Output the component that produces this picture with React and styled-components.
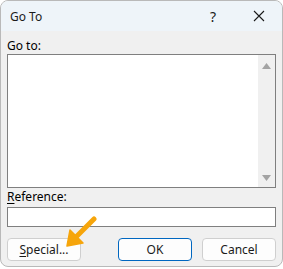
import React from 'react'
import styled, { createGlobalStyle } from 'styled-components'

const Global = createGlobalStyle`
    body{
        margin: 0;
        background: #ffffff;
        font-family: "Noto Sans", "Open Sans", sans-serif;
        font-size: 12px;
        color: #000;
    }
`

function App() {
    return (
        <>
            <Global />
            <Window>
                <TitleBar>
                    <Title>Go To</Title>
                    <TitleButton>?</TitleButton>
                    <TitleButton>
                        <svg width="12" height="12" viewBox="0 0 12 12">
                            <path d="M1 1 L11 11 M11 1 L1 11" stroke="#1a1a1a" strokeWidth="1.1" fill="none" />
                        </svg>
                    </TitleButton>
                </TitleBar>
                <Body>
                    <Label>Go to:</Label>
                    <ListBox>
                        <ListArea />
                        <ScrollBar>
                            <svg width="9" height="6" viewBox="0 0 9 6"><path d="M0 6 L4.5 0 L9 6 Z" fill="#a3a3a3" /></svg>
                            <svg width="9" height="6" viewBox="0 0 9 6"><path d="M0 0 L4.5 6 L9 0 Z" fill="#a3a3a3" /></svg>
                        </ScrollBar>
                    </ListBox>
                    <Label top={1}><u>R</u>eference:</Label>
                    <TextInput />
                    <ButtonRow>
                        <Button><u>S</u>pecial...</Button>
                        <Spacer />
                        <Button primary>OK</Button>
                        <Button>Cancel</Button>
                    </ButtonRow>
                </Body>
                <Arrow width="40" height="40" viewBox="0 0 40 40">
                    <path d="M28 3 L9 22" stroke="#f6a50b" strokeWidth="5" strokeLinecap="round" fill="none" />
                    <path d="M1 30 L4 14 L17 27 Z" fill="#f6a50b" stroke="#f6a50b" strokeWidth="1.5" strokeLinejoin="round" />
                </Arrow>
            </Window>
        </>
    )
}

export default App

const Window = styled.div`
    position: relative;
    width: 283px;
    height: 267px;
    box-sizing: border-box;
    border: 1px solid #b9b9b9;
    border-radius: 8px;
    background: #f0f0f0;
    overflow: hidden;
`

const TitleBar = styled.div`
    display: flex;
    align-items: center;
    height: 30px;
    background: #eef4f9;
`

const Title = styled.div`
    flex: 1;
    padding-left: 9px;
    font-size: 12px;
    color: #1a1a1a;
`

const TitleButton = styled.div`
    width: 46px;
    height: 30px;
    display: flex;
    align-items: center;
    justify-content: center;
    font-size: 14px;
    color: #1a1a1a;
`

const Body = styled.div`
    display: flex;
    flex-direction: column;
    padding: 7px 6px 0 6px;
`

const Label = styled.div`
    height: 16px;
    line-height: 16px;
    margin-top: ${p => p.top || 0}px;
    font-size: 12px;

    u{
        text-decoration-thickness: 1px;
        text-underline-offset: 2px;
    }
`

const ListBox = styled.div`
    display: flex;
    height: 134px;
    box-sizing: border-box;
    border: 1px solid #7f7f7f;
    background: #ffffff;
`

const ListArea = styled.div`
    flex: 1;
`

const ScrollBar = styled.div`
    width: 17px;
    display: flex;
    flex-direction: column;
    justify-content: space-between;
    align-items: center;
    padding: 8px 0 6px 0;
    background: #f0f0f0;
`

const TextInput = styled.div`
    margin-top: 2px;
    height: 20px;
    box-sizing: border-box;
    border: 1px solid #7f7f7f;
    background: #ffffff;
`

const ButtonRow = styled.div`
    display: flex;
    gap: 10px;
    margin-top: 11px;
`

const Spacer = styled.div`
    flex: 1;
`

const Button = styled.div`
    width: 74px;
    height: 23px;
    box-sizing: border-box;
    display: flex;
    align-items: center;
    justify-content: center;
    background: #fdfdfd;
    border: 1px solid ${p => p.primary ? '#0067c0' : '#cfcfcf'};
    border-radius: 4px;
    font-size: 12px;
    color: #1a1a1a;

    u{
        text-underline-offset: 2px;
    }
`

const Arrow = styled.svg`
    position: absolute;
    left: 65px;
    top: 215px;
`
